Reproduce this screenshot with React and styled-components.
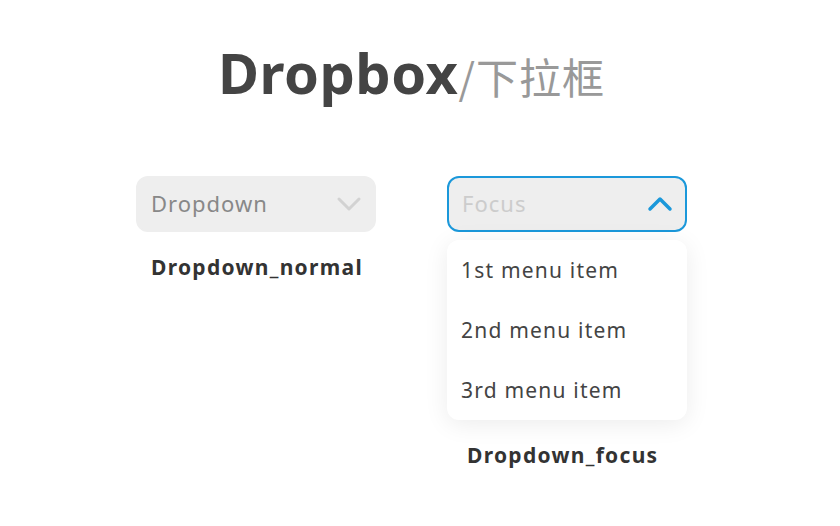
import React from 'react'
import styled, { createGlobalStyle } from 'styled-components'

const Global = createGlobalStyle`
  body {
    margin: 0;
    background: #ffffff;
    font-family: "Noto Sans", "Open Sans", "Noto Sans CJK SC", sans-serif;
  }
`

const Page = styled.div`
  width: 823px;
  padding-top: 36px;
`

const Title = styled.h1`
  margin: 0;
  text-align: center;
  font-size: 56px;
  line-height: 72px;
  font-weight: 700;
  color: #444444;
  letter-spacing: 0.5px;
`

const Sub = styled.span`
  font-family: "Noto Sans CJK SC", "Noto Sans", sans-serif;
  font-size: 42px;
  font-weight: 400;
  color: #999999;
  letter-spacing: 1px;
`

const Row = styled.div`
  display: flex;
  justify-content: center;
  align-items: flex-start;
  gap: 71px;
  margin-top: 64px;
`

const Column = styled.div`
  width: 240px;
  display: flex;
  flex-direction: column;
`

const Select = styled.div`
  box-sizing: border-box;
  height: 56px;
  border-radius: 12px;
  background: #eeeeee;
  border: ${({ focused }) => (focused ? '2.5px solid #1b98da' : '2px solid #eeeeee')};
  display: flex;
  align-items: center;
  justify-content: space-between;
  padding: 0 12px 3px 13px;
  font-size: 22px;
  letter-spacing: 1px;
  color: ${({ focused }) => (focused ? '#cccccc' : '#888888')};

  svg {
    margin-top: 3px;
  }
`

const Menu = styled.div`
  margin-top: 8px;
  background: #ffffff;
  border-radius: 12px;
  box-shadow: 0 4px 24px rgba(0, 0, 0, 0.08);
  display: flex;
  flex-direction: column;
`

const Item = styled.div`
  height: 60px;
  display: flex;
  align-items: center;
  padding-left: 14px;
  font-size: 21px;
  letter-spacing: 1.2px;
  color: #444444;
`

const Label = styled.div`
  margin-top: ${({ top }) => top}px;
  padding-left: ${({ indent }) => indent}px;
  font-size: 21px;
  font-weight: 700;
  letter-spacing: 1.3px;
  color: #333333;
`

const Chevron = ({ up, color, width }) => (
  <svg width="26" height="16" viewBox="0 0 26 16">
    <polyline
      points={up ? '3,13 13,3 23,13' : '3,3 13,13 23,3'}
      fill="none"
      stroke={color}
      strokeWidth={width}
      strokeLinecap="round"
      strokeLinejoin="round"
    />
  </svg>
)

export default function App() {
  return (
    <Page>
      <Global />
      <Title>
        Dropbox<Sub>/下拉框</Sub>
      </Title>
      <Row>
        <Column>
          <Select>
            Dropdown
            <Chevron color="#d2d2d2" width={3} />
          </Select>
          <Label top={21} indent={15}>Dropdown_normal</Label>
        </Column>
        <Column>
          <Select focused>
            Focus
            <Chevron up color="#1b98da" width={3.5} />
          </Select>
          <Menu>
            <Item>1st menu item</Item>
            <Item>2nd menu item</Item>
            <Item>3rd menu item</Item>
          </Menu>
          <Label top={21} indent={20}>Dropdown_focus</Label>
        </Column>
      </Row>
    </Page>
  )
}
